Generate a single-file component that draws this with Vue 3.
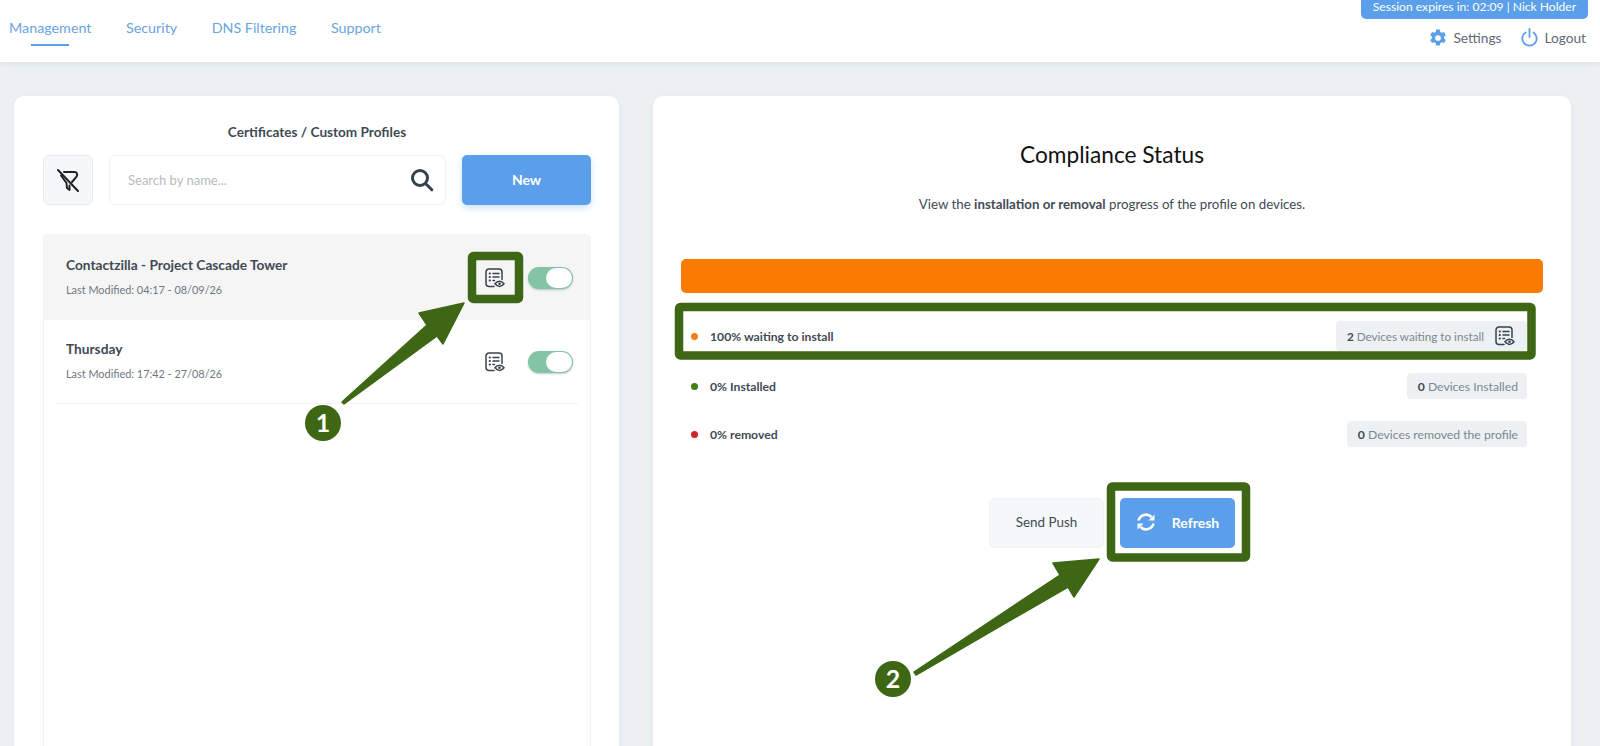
<template>
  <div class="page">
    <header class="topbar">
      <nav class="tabs">
        <a v-for="(tab, i) in tabs" :key="tab" class="tab" :class="{ active: i === 0 }">{{ tab }}</a>
      </nav>
      <div class="account">
        <div class="session">Session expires in: 02:09 | Nick Holder</div>
        <div class="account-links">
          <a class="account-link">
            <svg width="18" height="18" viewBox="0 0 24 24" fill="#5b9fea">
              <path fill-rule="evenodd" d="M9.6 0.8h4.8l0.7 3.1 1.9 1.1 3-1 2.4 4.1-2.3 2.2v2.2l2.3 2.2-2.4 4.1-3-1-1.9 1.1-0.7 3.1H9.6l-0.7-3.1-1.9-1.1-3 1-2.4-4.1 2.3-2.2v-2.2L1.6 8.1 4 4l3 1 1.9-1.1zM12 8.2a3.8 3.8 0 1 0 0 7.6 3.8 3.8 0 0 0 0-7.6z" />
            </svg>
            Settings
          </a>
          <a class="account-link">
            <svg width="17" height="19" viewBox="0 0 17 19" fill="none" stroke="#5b9fea" stroke-width="1.8" stroke-linecap="round">
              <path d="M8.5 1v8" />
              <path d="M4.6 4.4a7.2 7.2 0 1 0 7.8 0" />
            </svg>
            Logout
          </a>
        </div>
      </div>
    </header>

    <main class="content">
      <section class="card profiles">
        <h2 class="profiles-title">Certificates / Custom Profiles</h2>
        <div class="toolbar">
          <button class="filter-btn" type="button">
            <svg width="24" height="24" viewBox="0 0 24 24" fill="none" stroke="#1e2328" stroke-width="2" stroke-linecap="round" stroke-linejoin="round">
              <path d="M2 2l20 21" />
              <path d="M8 4h10.5c2.6 0 3.4 2.6 2 4.6L16 14" />
              <path d="M5 7.5l5.5 7.5 0.5 5 2.5 2 0-4.5" />
            </svg>
          </button>
          <div class="search">
            <span class="search-hint">Search by name...</span>
            <svg width="24" height="24" viewBox="0 0 24 24" fill="none" stroke="#33424d" stroke-width="3" stroke-linecap="round">
              <circle cx="10" cy="10" r="7.5" />
              <path d="M15.8 15.8l6 6" />
            </svg>
          </div>
          <button class="new-btn" type="button">New</button>
        </div>

        <ul class="profile-list">
          <li v-for="(item, i) in profiles" :key="item.name" class="profile" :class="{ selected: i === 0 }">
            <div class="profile-text">
              <div class="profile-name">{{ item.name }}</div>
              <div class="profile-meta">Last Modified: {{ item.modified }}</div>
            </div>
            <svg class="list-icon" width="20" height="20" viewBox="0 0 20 20" fill="none" stroke="#37434d" stroke-width="1.5" stroke-linecap="round">
              <path d="M9 18.6H4a3 3 0 0 1-3-3V4a3 3 0 0 1 3-3h10a3 3 0 0 1 3 3v7.5" />
              <path d="M8 5.5h6M8 9h6M8 12.5h1.5" />
              <path d="M4.6 5.5h.4M4.6 9h.4M4.6 12.5h.4" stroke-width="1.8" />
              <path d="M10 15.8c2.6-3.5 6.4-3.5 9 0-2.6 3.5-6.4 3.5-9 0z" />
              <circle cx="14.5" cy="15.8" r="1.3" fill="#37434d" stroke="none" />
            </svg>
            <span class="toggle"><span class="knob"></span></span>
          </li>
        </ul>
      </section>

      <section class="card compliance">
        <h1 class="compliance-title">Compliance Status</h1>
        <p class="compliance-sub">View the <b>installation or removal</b> progress of the profile on devices.</p>
        <div class="progress"></div>

        <div class="status-rows">
          <div v-for="row in statuses" :key="row.label" class="status-row">
            <span class="dot" :style="{ background: row.color }"></span>
            <span class="status-label">{{ row.label }}</span>
            <span class="pill" :class="{ tall: row.icon }">
              <b>{{ row.count }}</b>&nbsp;{{ row.text }}
              <svg v-if="row.icon" class="pill-icon" width="20" height="20" viewBox="0 0 20 20" fill="none" stroke="#37434d" stroke-width="1.5" stroke-linecap="round">
                <path d="M9 18.6H4a3 3 0 0 1-3-3V4a3 3 0 0 1 3-3h10a3 3 0 0 1 3 3v7.5" />
                <path d="M8 5.5h6M8 9h6M8 12.5h1.5" />
                <path d="M4.6 5.5h.4M4.6 9h.4M4.6 12.5h.4" stroke-width="1.8" />
                <path d="M10 15.8c2.6-3.5 6.4-3.5 9 0-2.6 3.5-6.4 3.5-9 0z" />
                <circle cx="14.5" cy="15.8" r="1.3" fill="#37434d" stroke="none" />
              </svg>
            </span>
          </div>
        </div>

        <div class="actions">
          <button class="push-btn" type="button">Send Push</button>
          <button class="refresh-btn" type="button">
            <svg width="20" height="20" viewBox="0 0 20 20" fill="none" stroke="#fff" stroke-width="2.6">
              <path d="M2.5 8.5A7.7 7.7 0 0 1 15.5 5" />
              <path d="M17.5 11.5A7.7 7.7 0 0 1 4.5 15" />
              <path d="M18.5 2.5v6h-6z" fill="#fff" stroke="none" />
              <path d="M1.5 17.5v-6h6z" fill="#fff" stroke="none" />
            </svg>
            Refresh
          </button>
        </div>
      </section>
    </main>

    <!-- tutorial marks drawn on top of the screenshot -->
    <svg class="marks" width="1600" height="746" viewBox="0 0 1600 746">
      <g fill="none" stroke="#3d6714" stroke-width="8.5">
        <rect x="472" y="256" width="47" height="43" rx="1.5" />
        <rect x="679" y="307" width="852.5" height="48.5" rx="1.5" />
        <rect x="1111" y="486.5" width="135" height="71" rx="1.5" />
      </g>
      <g fill="#3d6714" stroke="#3d6714" stroke-width="1.5" stroke-linejoin="round">
        <path d="M342 402L427 325L419 313L464 303L443 344L437 336L344 404Z" />
        <path d="M914 672L1060 575L1053 563L1099 559L1074 597L1068 587L916 675Z" />
      </g>
      <g fill="#3d6714">
        <circle cx="323" cy="423" r="18" />
        <circle cx="893" cy="679" r="18" />
      </g>
      <g class="mark-num" fill="#fff" text-anchor="middle">
        <text x="323" y="432">1</text>
        <text x="893" y="688">2</text>
      </g>
    </svg>
  </div>
</template>

<script setup>
const tabs = ['Management', 'Security', 'DNS Filtering', 'Support']

const profiles = [
  { name: 'Contactzilla - Project Cascade Tower', modified: '04:17 - 08/09/26' },
  { name: 'Thursday', modified: '17:42 - 27/08/26' }
]

const statuses = [
  { label: '100% waiting to install', color: '#f57c1a', count: 2, text: 'Devices waiting to install', icon: true },
  { label: '0% Installed', color: '#41800f', count: 0, text: 'Devices Installed' },
  { label: '0% removed', color: '#d3222a', count: 0, text: 'Devices removed the profile' }
]
</script>

<style>
html,
body {
  margin: 0;
  background: #ecf0f3;
}
</style>

<style scoped>
.page {
  position: relative;
  height: 746px;
  overflow: hidden;
  background: #ecf0f3;
  font-family: Lato, "Liberation Sans", sans-serif;
  color: #3f4a54;
}

.topbar {
  display: flex;
  justify-content: space-between;
  height: 62px;
  padding: 0 10px 0 9px;
  box-sizing: border-box;
  background: #fff;
  box-shadow: 0 1px 6px rgba(60, 80, 100, 0.1);
}

.tabs {
  display: flex;
  gap: 34.5px;
}

.tab {
  position: relative;
  padding-top: 18px;
  font-size: 14.3px;
  line-height: 19px;
  color: #6aa3e2;
}

.tab.active::after {
  content: "";
  position: absolute;
  left: 22px;
  top: 44px;
  width: 38px;
  height: 2px;
  background: #5b9fea;
}

.account {
  display: flex;
  flex-direction: column;
  align-items: flex-end;
}

.session {
  width: 227px;
  height: 19px;
  margin-right: 2px;
  border-radius: 0 0 5px 5px;
  background: #5b9fea;
  color: #fff;
  font-size: 12.1px;
  line-height: 14px;
  text-align: center;
}

.account-links {
  display: flex;
  gap: 20px;
  margin-top: 9px;
  padding-right: 4px;
}

.account-link {
  display: flex;
  align-items: center;
  gap: 6px;
  font-size: 13.7px;
  line-height: 19px;
  color: #5f6973;
}

.content {
  display: flex;
  gap: 34px;
  padding: 34px 29px 0 14px;
}

.card {
  height: 720px;
  box-sizing: border-box;
  border-radius: 10px;
  background: #fff;
  box-shadow: 0 1px 4px rgba(60, 80, 100, 0.06);
}

.profiles {
  flex: 0 0 605px;
  padding: 28px 28px 0 29px;
}

.profiles-title {
  margin: 0 0 15px;
  font-size: 13.6px;
  line-height: 16px;
  font-weight: 700;
  text-align: center;
}

.toolbar {
  display: flex;
  gap: 16px;
  height: 50px;
}

.filter-btn {
  display: flex;
  align-items: center;
  justify-content: center;
  width: 50px;
  padding: 0;
  border: 1px solid #e9ecef;
  border-radius: 6px;
  background: #f6f7f8;
}

.search {
  flex: 1;
  display: flex;
  align-items: center;
  justify-content: space-between;
  padding: 0 11px 0 18px;
  border: 1px solid #f0f2f4;
  border-radius: 6px;
}

.search-hint {
  font-size: 13px;
  color: #b6bbc0;
}

.new-btn {
  width: 129px;
  padding: 0 0 2px;
  border: none;
  border-radius: 5px;
  background: #5b9fea;
  color: #fff;
  font-family: inherit;
  font-size: 14px;
  font-weight: 700;
  box-shadow: 0 3px 6px rgba(91, 159, 234, 0.3);
}

.profile-list {
  height: 600px;
  margin: 29px 0 0;
  padding: 0;
  list-style: none;
  border: 1px solid #f1f2f4;
  border-radius: 5px 5px 0 0;
}

.profile {
  position: relative;
  display: flex;
  align-items: center;
  height: 84px;
  padding: 0 17px 0 22px;
}

.profile.selected {
  height: 85px;
  background: #f5f5f6;
}

.profile:not(.selected)::after {
  content: "";
  position: absolute;
  left: 12px;
  right: 12px;
  bottom: 0;
  height: 1px;
  background: #f1f2f4;
}

.profile-text {
  flex: 1;
  padding-bottom: 3px;
}

.profile-name {
  font-size: 13.7px;
  line-height: 18px;
  font-weight: 700;
}

.profile-meta {
  margin-top: 9px;
  font-size: 10.9px;
  line-height: 14px;
  color: #6e7780;
}

.toggle {
  display: flex;
  justify-content: flex-end;
  width: 45px;
  height: 22px;
  margin-left: 23px;
  border-radius: 11px;
  background: #82c4a4;
  box-shadow: 0 1px 2px rgba(60, 80, 100, 0.3);
}

.knob {
  width: 26px;
  height: 20px;
  margin: 1px;
  border-radius: 10px;
  background: #fff;
}

.compliance {
  flex: 1;
  padding: 0 28px;
}

.compliance-title {
  margin: 44px 0 0;
  font-size: 22.7px;
  line-height: 30px;
  font-weight: 400;
  color: #111;
  text-align: center;
}

.compliance-sub {
  margin: 25px 0 0;
  font-size: 13.3px;
  line-height: 18px;
  text-align: center;
}

.progress {
  height: 34px;
  margin-top: 46px;
  border-radius: 5px;
  background: #f97b02;
}

.status-rows {
  display: flex;
  flex-direction: column;
  gap: 22px;
  margin-top: 28px;
  padding: 0 16px 0 10px;
}

.status-row {
  display: flex;
  align-items: center;
  font-size: 12.2px;
}

.dot {
  width: 7px;
  height: 7px;
  margin-right: 12px;
  border-radius: 50%;
}

.status-label {
  flex: 1;
  font-weight: 700;
}

.pill {
  display: flex;
  align-items: center;
  height: 26px;
  padding: 0 9px 0 11px;
  border-radius: 4px;
  background: #edf1f4;
  color: #7d8790;
  font-size: 12.2px;
}

.pill.tall {
  height: 30px;
  padding-right: 12px;
  font-size: 11.7px;
}

.pill b {
  color: #3f4a54;
}

.pill-icon {
  margin-left: 11px;
}

.actions {
  display: flex;
  justify-content: center;
  gap: 16px;
  margin-top: 51px;
}

.push-btn,
.refresh-btn {
  width: 115px;
  height: 50px;
  padding: 0 0 2px;
  border-radius: 5px;
  font-family: inherit;
  font-size: 14px;
}

.push-btn {
  border: 1px solid #f0f1f3;
  background: #f6f7f8;
  color: #3f4a54;
  font-size: 13.4px;
}

.refresh-btn {
  display: flex;
  align-items: center;
  justify-content: center;
  gap: 16px;
  border: none;
  background: #5b9fea;
  color: #fff;
  font-weight: 700;
}

.marks {
  position: absolute;
  top: 0;
  left: 0;
  pointer-events: none;
}

.mark-num {
  font-size: 25px;
  font-weight: 700;
}
</style>
